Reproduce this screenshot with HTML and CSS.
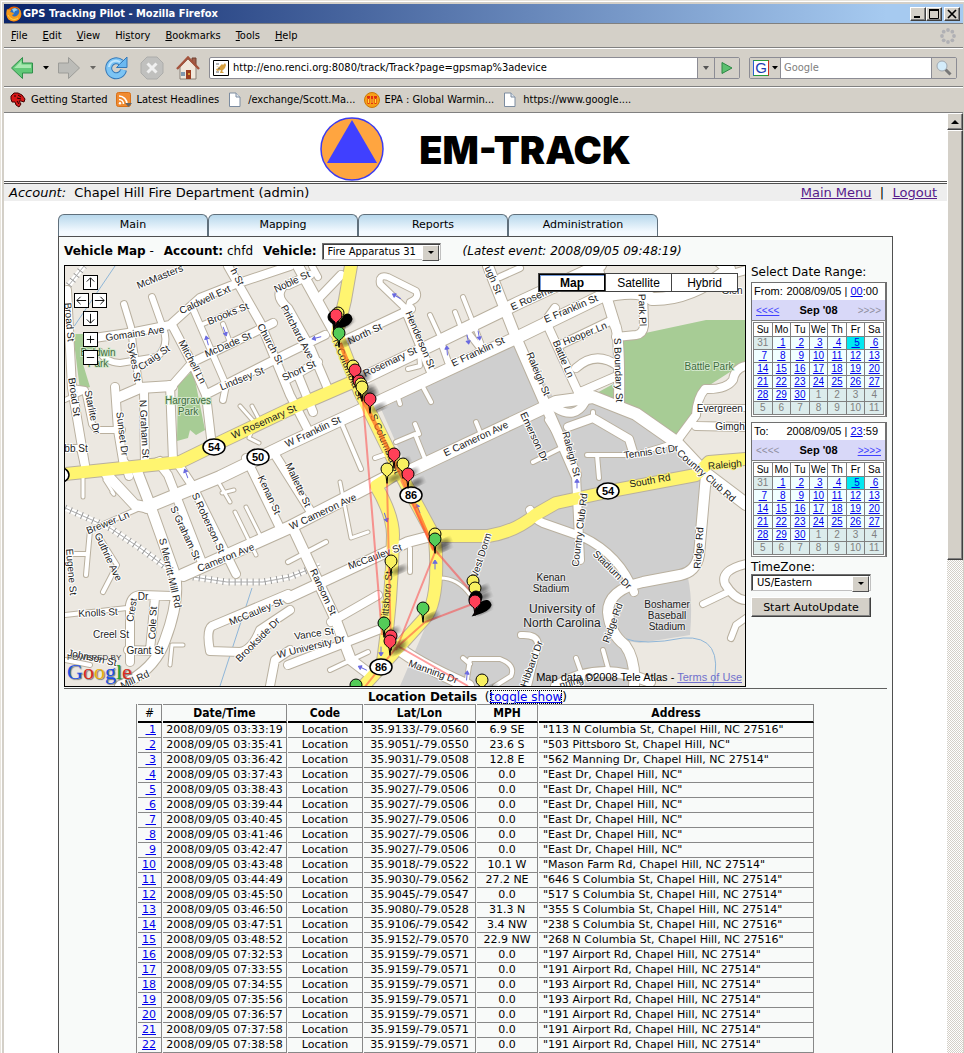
FILE: index.html
```html
<!DOCTYPE html>
<html lang="en">
<head>
<meta charset="utf-8">
<title>GPS Tracking Pilot - Mozilla Firefox</title>
<link rel="stylesheet" href="styles.css">
</head>
<body>
<div class="window">
  <header class="titlebar">
    <svg class="i16" viewBox="0 0 16 16"><circle cx="8" cy="8" r="7.500" fill="#e66000"/><circle cx="9" cy="7" r="5" fill="#2f6fc0"/><path d="M6 3l3-1 3 2-3 1-1 2z" fill="#8fd0f0"/><path d="M1 3C2 4 3 3 5 4L4 6C6 6 8 7 8 8L6 9C8 12 12 10 13 7C14 5 13 3 11 1C15 3 16 8 14 12C11 16 5 16 2 13C0 10 0 6 1 3Z" fill="#f59a1c"/><path d="M2 9c2 4 6 6 10 3" fill="none" stroke="#ffd84a"/></svg>
    <h1>GPS Tracking Pilot - Mozilla Firefox</h1>
    <div class="winbtns">
      <button class="bevel" aria-label="Minimize"><svg viewBox="0 0 12 10"><path d="M2 8h6" stroke="#000" stroke-width="2"/></svg></button>
      <button class="bevel" aria-label="Maximize"><svg viewBox="0 0 12 10"><path d="M1.500 1v8.500h9V1M1 1h10" fill="none" stroke="#000"/><path d="M1 1h10" stroke="#000" stroke-width="2"/></svg></button>
      <button class="bevel close" aria-label="Close"><svg viewBox="0 0 12 10"><path d="M2 1l8 8M10 1L2 9" stroke="#000" stroke-width="1.700"/></svg></button>
    </div>
  </header>

  <nav class="menubar">
    <button><u>F</u>ile</button><button><u>E</u>dit</button><button><u>V</u>iew</button><button>Hi<u>s</u>tory</button><button><u>B</u>ookmarks</button><button><u>T</u>ools</button><button><u>H</u>elp</button>
    <svg class="i16 throbber" viewBox="0 0 16 16" fill="#b0b0b4"><circle cx="8" cy="2" r="1.900"/><circle cx="12.300" cy="3.700" r="1.900"/><circle cx="14" cy="8" r="1.900"/><circle cx="12.300" cy="12.300" r="1.900"/><circle cx="8" cy="14" r="1.900"/><circle cx="3.700" cy="12.300" r="1.900"/><circle cx="2" cy="8" r="1.900"/><circle cx="3.700" cy="3.700" r="1.900"/></svg>
  </nav>

  <div class="toolbar">
    <button class="tool" aria-label="Back"><svg viewBox="0 0 24 24"><path d="M1.500 12L12.500 1.500V7H22.500V17H12.500V22.500Z" fill="#62c878" stroke="#2f8f4a"/><path d="M4 12L11.500 4.500V8.500H21V12Z" fill="#a8e8b0"/></svg></button>
    <button class="drop" aria-label="Back history"><svg viewBox="0 0 6 4"><path d="M0 0h6L3 3.500z"/></svg></button>
    <button class="tool" aria-label="Forward"><svg viewBox="0 0 24 24"><path d="M22.500 12L11.500 1.500V7H1.500V17H11.500V22.500Z" fill="#bcbcb8" stroke="#9c9c98"/></svg></button>
    <button class="drop dim" aria-label="Forward history"><svg viewBox="0 0 6 4"><path d="M0 0h6L3 3.500z"/></svg></button>
    <button class="tool" aria-label="Reload"><svg viewBox="0 0 24 24"><path d="M17 6.500A7.500 7.500 0 1 0 19.500 14" fill="none" stroke="#3478b8" stroke-width="7"/><path d="M23 1V11.500H12.500Z" fill="#6bb8f0" stroke="#3478b8"/><path d="M17 6.500A7.500 7.500 0 1 0 19.500 14" fill="none" stroke="#7cc4f4" stroke-width="5"/><path d="M5 11A7 7 0 0 1 16 6" fill="none" stroke="#c0e4fc" stroke-width="2"/></svg></button>
    <button class="tool gap" aria-label="Stop"><svg viewBox="0 0 24 24"><path d="M7 1H17L23 7V17L17 23H7L1 17V7Z" fill="#c0c0be" stroke="#acacaa"/><path d="M7.500 7.500l9 9M16.500 7.500l-9 9" stroke="#f0f0f0" stroke-width="3"/></svg></button>
    <button class="tool gap" aria-label="Home"><svg viewBox="0 0 24 24"><path d="M16 2h4v7h-4z" fill="#a0604c" stroke="#704030"/><path d="M4 11v12h16V11L12 3z" fill="#f0e8dc" stroke="#8a8078"/><path d="M1 13L12 1.500L23 13" fill="none" stroke="#a4533c" stroke-width="2.400"/><path d="M10 14h5v9h-5z" fill="#9c3c20"/><path d="M5 16h4v4H5z" fill="#8098b0"/><circle cx="13" cy="18" r="1" fill="#f0c040"/></svg></button>
    <div class="urlbox">
      <svg class="fav" viewBox="0 0 16 16"><path d="M.5.500h15v15H.5z" fill="#fff" stroke="#000"/><path d="M3 6L6 7L9 4L10 5L12 3L13 5L12 8L9 11L11 13H7L8 10L4 11L3 9L6 8Z" fill="#d6a040"/><path d="M3 12h3M3 4h3M5 9l2-1" stroke="#666"/></svg>
      <input aria-label="Address" value="http://eno.renci.org:8080/track/Track?page=gpsmap%3adevice">
      <button class="seg" aria-label="Show history"><svg viewBox="0 0 6 4"><path d="M0 0h6L3 4z" fill="#555"/></svg></button>
      <button class="seg go" aria-label="Go"><svg viewBox="0 0 12 12"><path d="M1 .5L11 6L1 11.500Z" fill="#5cc070" stroke="#2c8844"/></svg></button>
    </div>
    <div class="searchbox">
      <button class="engine" aria-label="Search engine"><span>G</span><svg viewBox="0 0 6 4"><path d="M0 0h6L3 3.500z"/></svg></button>
      <input aria-label="Search" placeholder="Google">
      <button class="seg go" aria-label="Search"><svg viewBox="0 0 16 16"><path d="M9.500 9.500l5 5" stroke="#777" stroke-width="3"/><circle cx="6" cy="6" r="5" fill="#d4ecfa" stroke="#a0a8b0"/></svg></button>
    </div>
  </div>

  <nav class="bookmarks">
    <a href="#"><svg class="i16" viewBox="0 0 16 16"><path d="M1 4L4 1L8 1L12 3L15 7L14 10L11 9L9 9L11 12L9 15L6 13L5 10L2 10L1 7Z" fill="#d81818" stroke="#400"/><path d="M4 4h2M8 3l3 2M7 6l4 1M7 9l2 3" stroke="#200"/></svg>Getting Started</a>
    <a href="#"><svg class="i16" viewBox="0 0 16 16"><rect x=".5" y=".5" width="14" height="14" rx="2" fill="#f08a30" stroke="#d87018"/><path d="M3 4a8 8 0 0 1 8 8M3 7.500a4.500 4.500 0 0 1 4.500 4.500" fill="none" stroke="#fff" stroke-width="1.600"/><circle cx="4" cy="11.300" r="1.200" fill="#fff"/><path d="M9 11h7l-3.500 4z" fill="#666"/></svg>Latest Headlines</a>
    <a href="#"><svg class="i16" viewBox="0 0 16 16"><path d="M2.500 1H9L13 5V14.500H2.500Z" fill="#fff" stroke="#7c8ca0"/><path d="M9 1V5H13" fill="#dfe6ee" stroke="#7c8ca0"/></svg>/exchange/Scott.Ma...</a>
    <a href="#"><svg class="i16" viewBox="0 0 16 16"><circle cx="8" cy="8" r="7.500" fill="#f8a018" stroke="#c87808"/><path d="M3 5h3M7 5h2M10 5h3M4.500 6v6M8 6v6M11.500 6v6" stroke="#e03010" stroke-width="2"/><path d="M4.500 7v4M8 7v4M11.500 7v4" stroke="#ffe040"/></svg>EPA : Global Warmin...</a>
    <a href="#"><svg class="i16" viewBox="0 0 16 16"><path d="M2.500 1H9L13 5V14.500H2.500Z" fill="#fff" stroke="#7c8ca0"/><path d="M9 1V5H13" fill="#dfe6ee" stroke="#7c8ca0"/></svg>https://www.google....</a>
  </nav>

  <div class="viewport">
    <div class="page">
      <div class="brand">
        <svg viewBox="0 0 64 64"><circle cx="32" cy="32" r="31" fill="#ffa540" stroke="#3c3cf0" stroke-width="1.500"/><path d="M32 3L57 46H7Z" fill="#4040ff"/></svg>
        <h2>EM-TRACK</h2>
      </div>
      <div class="account">
        <p><i>Account:</i>&nbsp; Chapel Hill Fire Department (admin)</p>
        <p><a href="#">Main Menu</a>&nbsp; |&nbsp; <a href="#">Logout</a></p>
      </div>

      <div class="content">
        <nav class="tabs"><a href="#">Main</a><a href="#">Mapping</a><a href="#">Reports</a><a href="#">Administration</a></nav>
        <main class="panel">
          <div class="maptitle">
            <span><b>Vehicle Map</b> -</span><span><b>Account:</b> chfd</span>
            <label for="vehicle">Vehicle:</label>
            <span class="select vehicle"><select id="vehicle"><option>Fire Apparatus 31</option></select></span>
            <i>(Latest event: 2008/09/05 09:48:19)</i>
          </div>

          <div class="maprow">
            <div class="map">
              <svg class="canvas" viewBox="65 266 680 420" preserveAspectRatio="xMidYMid slice">
                <defs>
                  <g id="roads">
                    <path class="w4" d="M240 406L255 423L249 438L259 443M252 406L262 425M246 507L261 537M235 512L256 555M219 483L230 502M222 493L234 490M340 482L351 538L368 532M440 578Q458 578 470 595M170 665L172 645L183 645M83 478V497M105 480Q118 500 112 492"/>
                    <path class="w5" d="M203 324L247 305M223 324L231 345M65 400L85 391M455 312L461 328M463 297L482 345M430 315L441 339M408 369L420 366L419 350M341 422L361 469M396 442L415 434L425 459M415 424L419 434M423 387L431 402M397 394L400 404M476 422L480 432M375 458L392 452M533 462L563 447M587 455H633L676 442M597 455L599 478M593 412V420M140 508L90 530L86 575M70 554H86M100 538L117 565L103 592M65 615L127 608M288 562L326 542M410 548V572M463 658L470 664M470 659H500Q516 665 511 676L495 686M470 659L466 686M576 658L582 675M603 650L608 668M330 670L368 652M65 660L90 665"/>
                    <path class="w6" d="M124 304L131 327L133 345L140 389M152 297L163 328Q170 345 157 357L120 363Q105 362 100 352M72 388L85 390L92 424L97 430L122 430M65 448H80L85 470M193 309L203 332L226 385L223 400M405 308L380 284Q378 274 388 277L416 291Q420 298 410 302L408 310M440 339L448 362M470 335L480 348M500 277L520 268M698 408H746M703 604L728 592M731 638L736 625L746 618M521 635Q538 634 538 645L528 686M137 470L160 460M548 420L558 436M545 322L530 330M312 266L318 277"/>
                    <path class="w8" d="M94 338L135 332L170 325L200 298L233 285L290 266M172 325L193 365L206 395L211 438M170 388L193 362L220 349L273 323M170 385L173 460M228 266L260 322L290 395L308 430M207 394L290 352L325 335M341 342L411 309M67 290L72 388L85 465M115 387L118 430L124 466M144 390L145 466M341 275L318 299M288 285L310 275M282 288Q275 297 288 308L311 349L328 389M288 379L318 362M405 309L431 372M546 322L578 392M560 345L608 322M576 368Q596 350 618 366M578 393L617 376M643 292L644 326Q643 334 636 335L616 337M746 366Q735 368 733 380Q726 390 705 389Q697 398 696 415L676 442M696 426L746 427M568 427L593 418L629 439L633 452M556 408Q575 420 585 402M125 463L129 476M158 462L168 475L203 565M178 464L192 485L236 574M246 458L281 530M272 450L311 512M288 594L212 626Q206 630 210 651L240 652Q252 650 260 630L290 610M288 665L378 630M331 622L378 595M270 686L275 660L290 650M130 662V605Q132 595 142 595L172 596M155 598L150 650M128 650L160 651M576 475L580 560M530 510Q535 520 543 523L583 537Q620 555 634 592M746 564Q720 570 725 584Q735 600 746 600M718 262L732 274L746 270M298 375L313 412M555 308L545 322"/>
                    <path class="w10" d="M117 398L140 388L172 386M298 266L335 333M135 466L150 505L175 575Q180 600 165 640Q155 670 120 686M107 475L135 505L150 508M293 528L335 618L351 660L372 676M288 598L408 542L435 535M598 270L615 325Q620 332 619 405M488 266L515 335L576 475M706 475L699 555Q696 572 680 575L643 582Q608 590 608 612Q610 634 625 645Q636 660 634 686M556 686Q600 660 650 682"/>
                    <path class="w12" d="M147 507L220 477L288 444L400 392L518 337L600 297Q640 288 652 299Q690 300 729 269M355 382L518 303L600 265M183 575L288 528L385 478M401 475L518 420L556 402L593 397L636 414L676 442L705 473L746 504M395 645Q410 660 468 686"/>
                  </g>
                  <g id="highways">
                    <path class="w12" d="M65 474L180 462L225 440L288 410L357 380M352 260L345 300L337 333L360 392L401 475L435 538Q440 600 425 618L398 648L360 690M401 470L376 486Q393 515 393 535Q392 600 383 662M435 536H488Q515 532 535 515L556 503L616 490L696 475L709 462L746 459"/>
                  </g>
                  <path id="pin" d="M0 13L-1 6C-3 4 -6 3 -6 -1A6 6 0 0 1 6 -1C6 3 3 4 1 6Z" stroke="#000"/>
                  <path id="arrow" d="M-5 0H1M1 -2L4 0L1 2Z" stroke="#6a6ae0" fill="#6a6ae0"/>
                  <filter id="soft"><feGaussianBlur stdDeviation="2"/></filter>
                </defs>
                <path d="M60 260H750V690H60Z" fill="#ece8e1"/>
                <path d="M381 409L518 337L556 402L600 398L640 415L676 442L702 475L697 560L688 578Q693 600 690 635L640 643L620 640L636 686H400L437 600V535Z" fill="#cfcfcf"/>
                <g fill="#a7cc95"><path d="M73 334L102 334L96 348V364H83L90 387L80 390Z"/><path d="M178 385L193 370L205 430L196 435L190 430L188 438L177 441Z"/><path d="M622 338L706 320H746V366L730 372L705 388L697 420L674 440L620 405Z"/><path d="M593 395L617 382V405Z"/></g>
                <path d="M623 638Q643 646 683 638Q725 635 713 686M252 588L220 686M115 266L73 328" fill="none" stroke="#8fb6d8"/>
                <g fill="none"><path d="M65 508L110 528L140 548L170 570M193 577L227 582H263L290 577L320 565M65 290L84 266" stroke="#fff" stroke-width="5"/><path d="M65 508L110 528L140 548L170 570M193 577L227 582H263L290 577L320 565M65 290L84 266" stroke="#999" stroke-width="7" stroke-dasharray="1 5"/><path d="M65 508L110 528L140 548L170 570M193 577L227 582H263L290 577L320 565M65 290L84 266" stroke="#aaa"/></g>
                <use href="#roads" class="casing"/><use href="#highways" class="casing"/>
                <use href="#roads" class="surface"/><use href="#highways" class="highway"/>
                <g id="labels"></g>
                <g id="oneway"></g>
                <g class="track"><path class="hot" d="M340 343L362 398L404 480L434 550"/><path d="M363 402L369 475L382 635M387 482L391 650M401 480L435 552L396 650M435 550L475 596M475 603L425 622L396 648L364 688M396 645L468 686"/></g>
                <g id="shields"></g>
                <path d="M338 326L345 316Q350 313 351 319Q350 325 338 327ZM475 614L482 603Q488 599 490 605Q489 610 475 614Z" stroke="#000" stroke-width="3"/>
                <g id="pins"></g>
              </svg>
              <div class="pan">
                <button class="up" aria-label="Pan up"><svg viewBox="0 0 14 14"><path d="M7 12V2M3 6L7 2L11 6"/></svg></button>
                <button class="left" aria-label="Pan left"><svg viewBox="0 0 14 14"><path d="M12 7H2M6 3L2 7L6 11"/></svg></button>
                <button class="right" aria-label="Pan right"><svg viewBox="0 0 14 14"><path d="M2 7H12M8 3L12 7L8 11"/></svg></button>
                <button class="down" aria-label="Pan down"><svg viewBox="0 0 14 14"><path d="M7 2V12M3 8L7 12L11 8"/></svg></button>
                <button class="in" aria-label="Zoom in"><svg viewBox="0 0 14 14"><path d="M7 3V11M3 7H11"/></svg></button>
                <button class="out" aria-label="Zoom out"><svg viewBox="0 0 14 14"><path d="M3 7H11"/></svg></button>
              </div>
              <div class="maptypes"><button class="on">Map</button><button>Satellite</button><button>Hybrid</button></div>
              <div class="logo"><small>POWERED BY</small><span class="b">G</span><span class="r">o</span><span class="y">o</span><span class="b">g</span><span class="g">l</span><span class="r">e</span></div>
              <p class="credit">Map data ©2008 Tele Atlas - <a href="#">Terms of Use</a></p>
            </div>

            <aside class="side">
              <p>Select Date Range:</p>
              <section class="cal" data-label="From:" data-hour="00" data-minute=":00" data-back="1"></section>
              <section class="cal" data-label="To:" data-hour="23" data-minute=":59" data-back=""></section>
              <label for="tz">TimeZone:</label>
              <span class="select tz"><select id="tz"><option>US/Eastern</option></select></span>
              <button class="bevel update">Start AutoUpdate</button>
            </aside>
          </div>

          <div class="details"><b>Location Details</b>&nbsp; (<a href="#">toggle show</a>)</div>
          <table class="locations">
            <colgroup><col class="c1"><col class="c2"><col class="c3"><col class="c4"><col class="c5"><col></colgroup>
            <thead><tr><th class="plain">#</th><th>Date/Time</th><th>Code</th><th>Lat/Lon</th><th>MPH</th><th>Address</th></tr></thead>
            <tbody id="rows"></tbody>
          </table>
        </main>
      </div>
    </div>
    <div class="scrollbar" aria-hidden="true"><div class="bevel arrow"><svg viewBox="0 0 8 4"><path d="M0 4L4 0L8 4Z"/></svg></div><div class="bevel thumb"></div></div>
  </div>
</div>
<script src="app.js"></script>
</body>
</html>
```

FILE: styles.css
```css
* { box-sizing: border-box; }
body { margin: 0; background: #d4d0c8; color: #000; font: 11px/14px "DejaVu Sans Condensed", "DejaVu Sans", sans-serif; }
p, h1, h2 { margin: 0; }
button, input, select { font: inherit; color: inherit; margin: 0; padding: 0; border: 0; border-radius: 0; background: none; }
button svg { display: block; margin: auto; }
a { color: #0000ee; }
.i16 { width: 16px; height: 16px; flex: none; }
.window { display: flex; flex-direction: column; height: 100vh; overflow: hidden; padding: 4px 1px 0 4px; background: #d4d0c8; box-shadow: inset 1px 1px #e8e4dc, inset 2px 2px #fff; }
.bevel { background: #d4d0c8; border: 1px solid; border-color: #fff #404040 #404040 #fff; box-shadow: inset -1px -1px #808080; }

/* window chrome */
.titlebar { display: flex; align-items: center; height: 19px; padding: 0 3px 0 2px; background: linear-gradient(90deg, #0a246a, #a6caf0 92%); color: #fff; flex: none; }
.titlebar h1 { flex: 1; padding-left: 1px; font-size: 11px; line-height: 16px; font-weight: bold; }
.winbtns { display: flex; }
.winbtns button { width: 16px; height: 14px; }
.winbtns .close { margin-left: 2px; }
.winbtns svg { width: 12px; height: 10px; }
.menubar { display: flex; align-items: center; gap: 15px; height: 25px; padding: 0 7px; border-top: 1px solid #808080; border-bottom: 1px solid #808080; flex: none; }
.throbber { margin-left: auto; }
.toolbar { display: flex; align-items: center; height: 39px; padding: 0 6px; border-top: 1px solid #fff; border-bottom: 1px solid #808080; flex: none; }
.tool { width: 24px; height: 24px; flex: none; }
.drop { width: 23px; height: 24px; flex: none; }
.drop svg, .engine svg { width: 6px; height: 4px; }
.dim { opacity: .5; }
.gap { margin-left: 12px; }
.urlbox, .searchbox { display: flex; align-items: center; height: 22px; border: 1px solid #8c8c94; border-radius: 2px; background: #fff; }
.urlbox { flex: 1; margin-left: 9px; }
.fav { width: 16px; height: 16px; margin: 0 4px 0 3px; }
.urlbox input, .searchbox input { flex: 1; min-width: 0; height: 18px; outline: 0; }
.searchbox input::placeholder { color: #808080; opacity: 1; }
.seg { width: 17px; height: 20px; background: #d4d0c8; border-left: 1px solid #8c8c94; }
.seg svg { width: 6px; height: 4px; }
.go { width: 25px; }
.go svg { width: 12px; height: 12px; }
.searchbox { width: 208px; margin-left: 9px; }
.searchbox .go svg { width: 16px; height: 16px; }
.engine { display: flex; align-items: center; width: 31px; height: 20px; padding-left: 3px; background: #d4d0c8; border-right: 1px solid #8c8c94; }
.engine span { width: 16px; height: 16px; border: 1px solid; border-color: #2a9c3a #d03020 #2a9c3a #2860d8; background: #fff; color: #1c3cb4; font: 15px/14px "Liberation Sans", sans-serif; text-align: center; }
.searchbox input { padding-left: 3px; }
.bookmarks { display: flex; align-items: center; gap: 8px; height: 26px; padding: 0 6px; border-top: 1px solid #fff; border-bottom: 1px solid #808080; flex: none; }
.bookmarks a { display: flex; align-items: center; gap: 5px; color: #000; text-decoration: none; white-space: nowrap; }

.viewport { display: flex; flex: 1; min-height: 0; }
.page { flex: 1; overflow: hidden; background: #fff; font: 13px/16px "DejaVu Sans", sans-serif; }
.scrollbar { display: flex; flex-direction: column; width: 16px; background: repeating-conic-gradient(#fff 0 25%, #d4d0c8 0 50%) 0 0 / 2px 2px; }
.scrollbar .arrow { height: 17px; display: grid; place-items: center; }
.arrow svg { width: 8px; height: 4px; }
.thumb { height: 430px; }

/* page header */
.brand { display: flex; justify-content: center; align-items: center; gap: 35px; height: 71px; border-bottom: 3px double #505050; }
.brand svg { width: 64px; height: 64px; margin-top: 4px; }
.brand h2 { margin-top: 6px; font: 900 38px/44px Inter, sans-serif; }
.account { display: flex; justify-content: space-between; padding: 0 10px 0 5px; height: 17px; line-height: 17px; background: #eee; }
.account a { color: #551a8b; }
.content { max-width: 835px; margin: 13px auto 0; }
.tabs { display: flex; font-size: 11px; }
.tabs a { width: 150px; height: 22px; line-height: 20px; border: 1px solid #60707c; border-bottom: 0; border-radius: 6px 6px 0 0; background: linear-gradient(#b8d8ec, #f4faff 80%); color: #000; text-align: center; text-decoration: none; }
.panel { min-height: 820px; padding: 0 5px; border: 1px solid #505050; background: #f8faf9; }
.maptitle { display: flex; align-items: center; gap: 10px; height: 28px; font-size: 12px; white-space: nowrap; }
.maptitle label { font-weight: bold; margin-right: -5px; }
.maptitle i { margin-left: 12px; }
.select { position: relative; display: block; height: 17px; border: 1px solid; border-color: #707070 #c0c0c0 #c0c0c0 #707070; box-shadow: inset 1px 1px #404040; background: #fff; }
.select select { display: block; width: 100%; height: 15px; padding-left: 5px; appearance: none; font: 10px/15px "DejaVu Sans", sans-serif; outline: 0; }
.select::before { content: ""; position: absolute; z-index: 1; top: 7px; right: 6px; border: 3px solid transparent; border-top-color: #000; border-bottom: 0; pointer-events: none; }
.select::after { content: ""; position: absolute; top: 1px; right: 1px; width: 15px; height: 14px; border: 1px solid; border-color: #fff #505050 #505050 #fff; background: #d4d0c8; pointer-events: none; }
.vehicle { width: 119px; }
.maprow { display: flex; gap: 5px; }
.map { position: relative; flex: 1; min-width: 0; height: 422px; border: 1px solid #000; overflow: hidden; }
.canvas { display: block; width: 100%; height: 100%; font-family: "Liberation Sans", sans-serif; }

/* map drawing */
.casing { --edge: 2px; stroke: #b9b09f; fill: none; }
.surface { --edge: 0px; stroke: #fff; fill: none; }
.highway { --edge: 0px; stroke: #fff570; fill: none; }
.canvas use { stroke-linecap: round; stroke-linejoin: round; }
.w4 { stroke-width: calc(3px + var(--edge)); }
.w5 { stroke-width: calc(4px + var(--edge)); }
.w6 { stroke-width: calc(6px + var(--edge)); }
.w8 { stroke-width: calc(8px + var(--edge)); }
.w10 { stroke-width: calc(10px + var(--edge)); }
.w12 { stroke-width: calc(12px + var(--edge)); }
.canvas text { text-anchor: middle; font-size: 10px; fill: #222; stroke: #fff; stroke-width: 2px; paint-order: stroke; stroke-linejoin: round; }
.canvas .onyellow { stroke: #fff570; }
.canvas .green { fill: #3c6c3c; stroke: #d4e8cc; }
.canvas .place { stroke: #e4e4e4; }
.canvas .big { font-size: 12px; stroke: #e4e4e4; }
.canvas .shield { font-size: 11px; font-weight: bold; stroke: none; fill: #000; }
.track { fill: none; stroke: #ff3c3c; stroke-opacity: .5; stroke-width: 2px; }
.track .hot { stroke: #ff6a20; stroke-opacity: .7; stroke-width: 4px; }
.red { fill: #ff4058; }
.yellow { fill: #f8f060; }
.lime { fill: #54cc58; }
.black { fill: #000; }

/* map controls */
.pan { position: absolute; top: 9px; left: 9px; display: grid; grid-template-columns: repeat(4, 8px); grid-auto-rows: 15px; gap: 3px 1px; }
.pan button { width: 15px; height: 15px; border: 1px solid #000; background: #fff; }
.pan svg { width: 13px; height: 13px; fill: none; stroke: #000; }
.up, .down, .in, .out { grid-column: 2 / 4; }
.left { grid-column: 1 / 3; grid-row: 2; }
.right { grid-column: 3 / 5; grid-row: 2; }
.in { margin-top: 3px; }
.out { margin-top: 3px; }
.maptypes { position: absolute; top: 7px; right: 7px; display: flex; font: 12px/16px "Liberation Sans", sans-serif; }
.maptypes button { width: 67px; height: 19px; border: 1px solid #000; background: #fff; outline: 1px solid #444; outline-offset: -1px; }
.maptypes button + button { margin-left: -1px; }
.maptypes .on { width: 68px; font-weight: bold; border-width: 2px; box-shadow: inset 1px 1px #7098d8; }
.logo { position: absolute; left: 2px; bottom: 3px; font: 22px/22px "Liberation Serif", serif; text-shadow: 1px 1px 1px #777; }
.logo small { display: block; font: 8px/6px "Liberation Sans", sans-serif; text-shadow: none; color: #333; }
.b { color: #1c50e0; }
.r { color: #d82c20; }
.y { color: #e8b010; }
.g { color: #20a030; }
.credit { position: absolute; right: 3px; bottom: 2px; font: 11px/14px "Liberation Sans", sans-serif; }
.credit a { color: #7070cc; }

/* date range */
.side { display: flex; flex-direction: column; align-items: flex-start; width: 136px; line-height: 15px; font-size: 12px; }
.side > p { padding-bottom: 2px; }
.side > label { line-height: 14px; }
.cal { width: 100%; margin-bottom: 5px; border: 1px solid #707070; border-right-width: 2px; background: #fff; font: 11px/13px "Liberation Sans", sans-serif; }
.cal + label { margin-top: -2px; }
.when { display: flex; justify-content: space-between; height: 17px; line-height: 17px; padding: 0 7px 0 2px; }
.month { display: flex; justify-content: space-between; align-items: center; height: 21px; padding: 0 4px; background: #d8d8f8; border-bottom: 1px solid #808080; font-size: 10px; }
.month b { font-size: 11px; }
.month a { color: #4040ff; }
.off { color: #9090a0; }
.days { width: 100%; border-spacing: 1px; background: #808080; border: 1px solid #fff; outline: 1px solid #808080; table-layout: fixed; font-size: 10px; line-height: 12px; }
.days th, .days td { padding: 0; height: 12px; background: #f0ffff; text-align: center; font-weight: normal; }
.days th { height: 13px; background: #fff; }
.days .other { background: #dcecec; color: #808080; }
.days .today { background: #00e8f0; }
.tz { width: 120px; }
.update { width: 120px; height: 20px; margin-top: 6px; font-size: 11px; }

/* location table */
.details { margin-top: 1px; padding-right: 16px; border-top: 1px solid #606060; text-align: center; height: 16px; line-height: 16px; font-size: 12px; }
.details a { outline: 1px dotted #000; outline-offset: -1px; }
.locations { width: 679px; max-width: 100%; margin: 0 auto; table-layout: fixed; border-spacing: 1px 0; font-size: 11px; line-height: 14px; border-left: 1px solid #888; }
.c1 { width: 24px; }
.c2 { width: 124px; }
.c3 { width: 75px; }
.c4 { width: 112px; }
.c5 { width: 61px; }
.locations th { height: 19px; padding: 0; border-top: 1px solid #888; border-right: 1px solid #888; border-bottom: 2px solid #000; font: bold 12px/15px "DejaVu Sans Condensed", "DejaVu Sans", sans-serif; }
.locations .plain { font-weight: normal; }
.locations td { height: 15px; padding: 0; border-right: 1px solid #888; border-bottom: 1px solid #888; text-align: center; white-space: nowrap; }
.locations td:first-child { text-align: right; padding-right: 5px; }
.locations td:last-child { text-align: left; padding-left: 4px; }
```

FILE: app.js
```js
// [text, x, y, angle, class]
const labels = [
  ["McMasters", 160, 277, -22], ["Caldwell Ext", 205, 300, -25], ["Gomains Ave", 135, 334, -8], ["Brooks St", 228, 314, -22],
  ["McDade St", 228, 345, -23], ["Mitchell Ln", 192, 362, 62], ["Craig St", 154, 358, -35], ["Sykes St", 134, 362, 80],
  ["Church St", 270, 344, 62], ["h St", 237, 277, 62], ["Lindsey St", 242, 379, -22], ["Starlite Dr", 92, 412, 78], ["Broad St", 74, 397, 82],
  ["Broad St", 69, 322, 85], ["Sunset Dr", 122, 434, 83], ["N Graham St", 144, 429, 87], ["W Rosemary St", 264, 422, -24, "onyellow"],
  ["bb St", 76, 449, 0], ["Noble St", 292, 282, -25], ["Pritchard Ave", 297, 332, 62], ["Short St", 299, 371, -25],
  ["North St", 365, 334, -25], ["Rosemary St", 390, 362, -25], ["E Franklin St", 478, 352, -25], ["Henderson St", 420, 340, 67],
  ["S Columbia St", 385, 444, 67, "onyellow"], ["N Columbia St", 348, 369, 67, "onyellow"], ["W Franklin St", 313, 432, -25],
  ["E Cameron Ave", 476, 439, -25], ["ugh St", 493, 280, 67], ["E Rosemary St", 542, 294, -24], ["E Franklin St", 571, 309, -23],
  ["Hooper Ln", 585, 334, -22], ["Battle Ln", 563, 359, 67], ["Raleigh St", 538, 374, 67], ["S Boundary St", 618, 370, 88],
  ["Park Pl", 642, 310, 88], ["Glen", 732, 291, 0], ["Battle Park", 709, 367, 0, "green"], ["Evergreen L", 724, 409, 0],
  ["Gimgh", 730, 427, 0], ["Emerson Dr", 534, 437, 65], ["Raleigh St", 571, 454, 75], ["Tennis Ct Dr", 651, 452, -8],
  ["Country Club Rd", 706, 476, 41], ["Raleigh", 725, 465, -5, "onyellow"], ["South Rd", 650, 481, -10, "onyellow"],
  ["Brewer Ln", 108, 523, -22], ["Guthrie Ave", 108, 557, 65], ["Eugene St", 71, 572, 85], ["S Merritt Mill Rd", 170, 573, 77],
  ["S Graham St", 185, 533, 65], ["S Roberson St", 208, 523, 65], ["Cameron Ave", 226, 558, -22], ["Kenan St", 269, 495, 65],
  ["Crest", 132, 610, -80], ["Dr", 143, 597, 0], ["Cole St", 153, 623, -87], ["Knolls St", 98, 613, -3], ["Creel St", 111, 635, 0],
  ["Grant St", 145, 651, 0], ["Johnson St", 92, 658, 12], ["Mill Rd", 135, 680, -25], ["McCauley St", 256, 612, -22],
  ["Brookside Dr", 258, 640, -45], ["Mallette St", 298, 485, 65], ["W Cameron Ave", 323, 512, -25], ["McCauley St", 375, 557, -20],
  ["Ransom St", 323, 592, 65], ["Vance St", 314, 634, -8], ["W University Dr", 311, 647, -14], ["Pittsboro St", 387, 597, -85, "onyellow"],
  ["Manning Dr", 433, 672, 20], ["West Dorm", 481, 557, -72], ["Stadium Dr", 612, 570, 45], ["Country Club Rd", 580, 530, -83],
  ["Ridge Rd", 699, 548, -86], ["Ridge Rd", 613, 623, -70], ["Hibbard Dr", 532, 664, -70], ["Kenan", 551, 578, 0, "place"],
  ["Stadium", 551, 589, 0, "place"], ["University of", 562, 610, 0, "big"], ["North Carolina", 562, 624, 0, "big"],
  ["Boshamer", 667, 605, 0, "place"], ["Baseball", 667, 616, 0, "place"], ["Stadium", 667, 627, 0, "place"], ["nning Dr", 578, 681, -15],
  ["Hargraves", 188, 401, 0, "green"], ["Park", 188, 412, 0, "green"], ["Baldwin", 98, 353, 0, "green"], ["Park", 98, 364, 0, "green"]
];
const shields = [["54", 214, 447], ["50", 258, 457], ["86", 411, 495], ["54", 608, 491], ["86", 381, 667], ["", 58, 475]];
const arrows = [
  [207, 340, -105], [225, 332, 70], [316, 338, 165], [396, 296, -150], [447, 350, -95], [468, 340, 80], [479, 336, 80],
  [186, 473, -110], [386, 518, 72], [418, 508, -112], [435, 564, -90], [381, 652, 90], [362, 668, -155], [467, 675, -85], [577, 483, -90]
];
const pins = [
  ["yellow", 338, 314], ["black", 334, 318], ["red", 336, 316], ["lime", 339, 334], ["yellow", 353, 367], ["red", 355, 371], ["red", 359, 382],
  ["yellow", 361, 385], ["yellow", 362, 388], ["red", 370, 400], ["red", 394, 455], ["yellow", 387, 470], ["yellow", 403, 465], ["red", 408, 475],
  ["yellow", 435, 535], ["lime", 435, 540], ["yellow", 391, 562], ["lime", 384, 624], ["red", 391, 637], ["red", 390, 642], ["lime", 423, 609],
  ["yellow", 473, 582], ["yellow", 475, 589], ["black", 476, 598], ["black", 475, 600], ["red", 475, 602], ["lime", 356, 686], ["yellow", 482, 681]
];
document.getElementById("labels").innerHTML = labels.map(([t, x, y, a, c]) =>
  `<text class="${c || ""}" transform="translate(${x} ${y}) rotate(${a})" y="3">${t}</text>`).join("");
document.getElementById("shields").innerHTML = shields.map(([t, x, y]) =>
  `<ellipse cx="${x}" cy="${y}" rx="11" ry="8" fill="#fff" stroke="#000" stroke-width="1.5"/><text class="shield" x="${x}" y="${y + 4}">${t}</text>`).join("");
document.getElementById("oneway").innerHTML = arrows.map(([x, y, a]) =>
  `<use href="#arrow" transform="translate(${x} ${y}) rotate(${a})"/>`).join("");
document.getElementById("pins").innerHTML = pins.map(([c, x, y]) =>
  `<ellipse cx="${x + 8}" cy="${y + 8}" rx="8" ry="3" transform="rotate(-25 ${x + 8} ${y + 8})" opacity=".5" filter="url(#soft)"/>
   <use href="#pin" class="${c}" x="${x}" y="${y}"/>`).join("");

// September 2008 starts on a Monday
document.querySelectorAll(".cal").forEach((cal) => {
  const { label, hour, minute, back } = cal.dataset;
  let weeks = "";
  for (let w = 0; w < 6; w++) {
    weeks += "<tr>";
    for (let d = 0; d < 7; d++) {
      const n = w * 7 + d;
      if (n < 1) weeks += '<td class="other">31</td>';
      else if (n > 30) weeks += `<td class="other">${n - 30}</td>`;
      else weeks += `<td${n === 5 ? ' class="today"' : ""}><a href="#">${n < 10 ? "&nbsp;" : ""}${n}</a></td>`;
    }
    weeks += "</tr>";
  }
  const prev = "&lt;&lt;&lt;&lt;", next = "&gt;&gt;&gt;&gt;";
  cal.innerHTML = `<div class="when"><span>${label}</span><span>2008/09/05 | <a href="#">${hour}</a>${minute}</span></div>
    <div class="month">${back ? `<a href="#">${prev}</a>` : `<span class="off">${prev}</span>`}<b>Sep '08</b>${back ? `<span class="off">${next}</span>` : `<a href="#">${next}</a>`}</div>
    <table class="days"><thead><tr>${["Su", "Mo", "Tu", "We", "Th", "Fr", "Sa"].map((d) => `<th>${d}</th>`).join("")}</tr></thead><tbody>${weeks}</tbody></table>`;
});

const events = [
  ["03:33:19", "35.9133/-79.0560", "6.9 SE", "113 N Columbia St, Chapel Hill, NC 27516"],
  ["03:35:41", "35.9051/-79.0550", "23.6 S", "503 Pittsboro St, Chapel Hill, NC"],
  ["03:36:42", "35.9031/-79.0508", "12.8 E", "562 Manning Dr, Chapel Hill, NC 27514"],
  ["03:37:43", "35.9027/-79.0506", "0.0", "East Dr, Chapel Hill, NC"],
  ["03:38:43", "35.9027/-79.0506", "0.0", "East Dr, Chapel Hill, NC"],
  ["03:39:44", "35.9027/-79.0506", "0.0", "East Dr, Chapel Hill, NC"],
  ["03:40:45", "35.9027/-79.0506", "0.0", "East Dr, Chapel Hill, NC"],
  ["03:41:46", "35.9027/-79.0506", "0.0", "East Dr, Chapel Hill, NC"],
  ["03:42:47", "35.9027/-79.0506", "0.0", "East Dr, Chapel Hill, NC"],
  ["03:43:48", "35.9018/-79.0522", "10.1 W", "Mason Farm Rd, Chapel Hill, NC 27514"],
  ["03:44:49", "35.9030/-79.0562", "27.2 NE", "646 S Columbia St, Chapel Hill, NC 27514"],
  ["03:45:50", "35.9045/-79.0547", "0.0", "517 S Columbia St, Chapel Hill, NC 27514"],
  ["03:46:50", "35.9080/-79.0528", "31.3 N", "355 S Columbia St, Chapel Hill, NC 27514"],
  ["03:47:51", "35.9106/-79.0542", "3.4 NW", "238 S Columbia St, Chapel Hill, NC 27516"],
  ["03:48:52", "35.9152/-79.0570", "22.9 NW", "268 N Columbia St, Chapel Hill, NC 27516"],
  ["07:32:53", "35.9159/-79.0571", "0.0", "197 Airport Rd, Chapel Hill, NC 27514"],
  ["07:33:55", "35.9159/-79.0571", "0.0", "191 Airport Rd, Chapel Hill, NC 27514"],
  ["07:34:55", "35.9159/-79.0571", "0.0", "193 Airport Rd, Chapel Hill, NC 27514"],
  ["07:35:56", "35.9159/-79.0571", "0.0", "193 Airport Rd, Chapel Hill, NC 27514"],
  ["07:36:57", "35.9159/-79.0571", "0.0", "191 Airport Rd, Chapel Hill, NC 27514"],
  ["07:37:58", "35.9159/-79.0571", "0.0", "191 Airport Rd, Chapel Hill, NC 27514"],
  ["07:38:58", "35.9159/-79.0571", "0.0", "191 Airport Rd, Chapel Hill, NC 27514"]
];
document.getElementById("rows").innerHTML = events.map(([time, pos, mph, addr], i) =>
  `<tr><td><a href="#">${i < 9 ? "&nbsp;" : ""}${i + 1}</a></td><td>2008/09/05 ${time}</td><td>Location</td><td>${pos}</td><td>${mph}</td><td>"${addr}"</td></tr>`).join("");
```
